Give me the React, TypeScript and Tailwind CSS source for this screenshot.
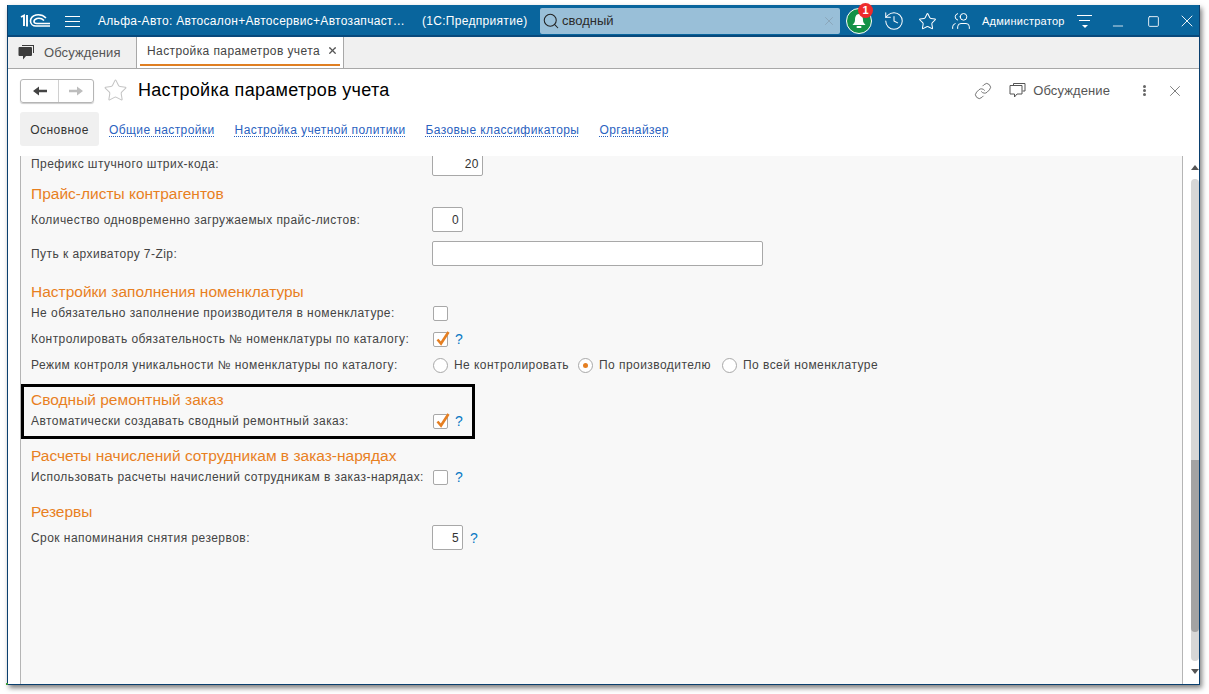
import { History, Star, Users, Link, X, Minus, Square, Search } from "lucide-react";
import type { ReactNode } from "react";

const Help = ({ className = "ml-[7px]" }: { className?: string }) => (
  <span className={`${className} text-[14px] leading-none text-[#0a78c4]`}>?</span>
);

const CheckBox = ({ checked = false }: { checked?: boolean }) => (
  <span className="relative block h-[15px] w-[15px] rounded-[2px] border border-[#a8a8a8] bg-white">
    {checked && (
      <svg className="absolute left-[1px] top-[-4px]" width="16" height="18" viewBox="0 0 16 18" fill="none">
        <path d="M2.5 10.5 L6 14.5 L13.5 3" stroke="#e57f22" strokeWidth="2.6" />
      </svg>
    )}
  </span>
);

const Radio = ({ label, on = false }: { label: string; on?: boolean }) => (
  <span className="flex items-center">
    <span className="flex h-[15px] w-[15px] items-center justify-center rounded-full border border-[#a8a8a8] bg-white">
      {on && <span className="h-[5px] w-[5px] rounded-full bg-[#e57f22]" />}
    </span>
    <span className="ml-[6px]">{label}</span>
  </span>
);

const Heading = ({ children, className }: { children: ReactNode; className: string }) => (
  <div className={`${className} flex h-5 items-center text-[15.5px] tracking-normal text-[#e8801f]`}>{children}</div>
);

const Row = ({ label, children, className }: { label: string; children?: ReactNode; className: string }) => (
  <div className={`${className} flex items-center`}>
    <div className="w-[401px] shrink-0">{label}</div>
    {children}
  </div>
);

const NumberBox = ({ value, width }: { value: string; width: string }) => (
  <div className={`${width} flex h-[25px] items-center justify-end rounded-[2px] border border-[#a8a8a8] bg-white pr-[3px] text-[#333]`}>
    {value}
  </div>
);

const links = ["Общие настройки", "Настройка учетной политики", "Базовые классификаторы", "Органайзер"];

export default function App() {
  return (
    <div className="h-[694px] w-[1209px] overflow-hidden bg-white pl-[7px] pt-[5px] font-['Liberation_Sans',Arial,sans-serif] text-[12px] tracking-[0.45px] text-[#444]">
      <div className="relative flex h-[680px] w-[1193px] flex-col border-x border-b border-[#0a3f6e] shadow-[2px_3px_5px_rgba(0,0,0,0.5)]">
        <span className="absolute bottom-[-1px] left-[-2px] h-[2px] w-[2px] bg-[#3c9a3c]" />

        {/* title bar */}
        <div className="flex h-[32px] shrink-0 items-center border-b-2 border-[#07497c] bg-[#09659d] pt-[2px] text-white">
          <svg className="ml-[12px] shrink-0" width="32" height="16" viewBox="0 0 32 16" fill="none" stroke="white">
            <path d="M1 4 L4 2.5 V13 M7 2 V13.5" strokeWidth="1.9" />
            <path d="M26 5 C23 2 19 1.5 16 2 C12 3 10.5 6 10.5 8 C10.5 11 13 13 16 13 H30" strokeWidth="1.6" />
            <path d="M24 7.5 C22 5.5 19 5 17 5.5 C15 6.2 14 7.5 14 8.5 C14 10 15.5 10.5 17 10.5 H30" strokeWidth="1.6" />
          </svg>
          <div className="ml-[13px] flex w-[16px] shrink-0 flex-col gap-[4px]">
            <span className="h-px w-[15px] bg-white" />
            <span className="h-px w-[15px] bg-white" />
            <span className="h-px w-[15px] bg-white" />
          </div>
          <span className="ml-[17px] w-[324px] shrink-0 whitespace-nowrap text-[12px] tracking-[0.3px]">
            Альфа-Авто: Автосалон+Автосервис+Автозапчаст…
          </span>
          <span className="w-[118px] shrink-0 whitespace-nowrap text-[12px] tracking-[0.3px]">(1С:Предприятие)</span>
          <div className="flex h-[26px] w-[300px] shrink-0 items-center rounded-[2px] bg-[#99bfd8] pl-[2px] text-[13px] tracking-normal text-[#2b2b2b]">
            <Search size={18} strokeWidth={1.4} className="text-[#222]" />
            <span className="ml-[2px]">сводный</span>
            <X size={14} strokeWidth={1.6} className="ml-auto mr-[4px] text-[#8aa5b8]" />
          </div>
          <div className="relative ml-[6px] flex h-[26px] w-[26px] shrink-0 items-center justify-center rounded-full border border-white bg-[#129147]">
            <svg width="16" height="16" viewBox="0 0 16 16" fill="white">
              <path d="M8 1 C5 1 4 4 4 7 C4 9 3 10.5 1.5 12 H14.5 C13 10.5 12 9 12 7 C12 4 11 1 8 1 Z" />
              <rect x="5.5" y="13" width="5" height="2" rx="1" />
            </svg>
            <span className="absolute right-[-2px] top-[-6px] flex h-[15px] w-[15px] items-center justify-center rounded-full bg-[#ee2b2b] text-[11px] font-bold tracking-normal text-white">
              1
            </span>
          </div>
          <History size={22} strokeWidth={1.1} className="ml-[11px] shrink-0" />
          <Star size={19} strokeWidth={1.3} className="ml-[13px] shrink-0" />
          <Users size={20} strokeWidth={1.2} className="ml-[14px] shrink-0 scale-x-[-1]" />
          <span className="ml-[11px] w-[83px] shrink-0 whitespace-nowrap text-[11px] tracking-[0.25px]">Администратор</span>
          <div className="ml-[12px] flex w-[15px] shrink-0 flex-col items-center gap-[4px]">
            <span className="h-px w-[15px] bg-white" />
            <span className="h-px w-[11px] bg-white" />
            <span className="h-0 w-0 border-x-[3px] border-t-[3px] border-x-transparent border-t-white" />
          </div>
          <Minus size={16} strokeWidth={1.2} className="ml-[18px] mt-[10px] shrink-0" />
          <Square size={13} strokeWidth={1.6} className="ml-[21px] shrink-0" />
          <X size={20} strokeWidth={1.1} className="ml-[17px] shrink-0" />
        </div>

        {/* open windows */}
        <div className="flex h-[32px] shrink-0 border-b border-[#a8a8a8] bg-[#f0f0f0]">
          <div className="flex w-[129px] shrink-0 items-center border-r border-[#a8a8a8] pl-[10px]">
            <svg width="17" height="17" viewBox="0 0 17 17" fill="#3c3c3c">
              <path d="M4 1 H16 V9 H15 V2 H4 Z" />
              <path d="M1.5 3 H13 Q14 3 14 4 V11 Q14 12 13 12 H8 L5 15.5 V12 H1.5 Q0.5 12 0.5 11 V4 Q0.5 3 1.5 3 Z" />
            </svg>
            <span className="ml-[9px] text-[13px] tracking-[0.1px] text-[#555]">Обсуждения</span>
          </div>
          <div className="flex w-[207px] shrink-0 flex-col border-r border-[#a8a8a8] bg-white px-[3px]">
            <div className="flex flex-1 items-center whitespace-nowrap pl-[7px] tracking-[0.4px] text-[#444]">
              <span>Настройка параметров учета</span>
              <X size={11} strokeWidth={2.8} className="ml-[7px] text-[#555]" />
            </div>
            <div className="mb-[2px] h-[2px] bg-[#e07f22]" />
          </div>
        </div>

        {/* form header */}
        <div className="flex h-[43px] shrink-0 items-center bg-white pl-[12px] pr-[15px]">
          <div className="flex h-[24px] w-[74px] items-center rounded-[3px] border border-[#b5b5b5] shadow-[0_1px_1px_rgba(0,0,0,0.2)]">
            <svg className="ml-[12px]" width="14" height="10" viewBox="0 0 14 10" fill="#444">
              <path d="M0 5 L6 0.5 V3.8 H14 V6.2 H6 V9.5 Z" />
            </svg>
            <span className="ml-[11px] h-full w-px bg-[#d0d0d0]" />
            <svg className="ml-[10px]" width="14" height="10" viewBox="0 0 14 10" fill="#bdbdbd">
              <path d="M14 5 L8 0.5 V3.8 H0 V6.2 H8 V9.5 Z" />
            </svg>
          </div>
          <Star size={25} strokeWidth={1} className="ml-[9px] text-[#c4c4c4]" />
          <h1 className="ml-[10px] text-[18px] tracking-[0.3px] text-black">Настройка параметров учета</h1>
          <Link size={18} strokeWidth={1.2} className="ml-auto text-[#666]" />
          <svg className="ml-[17px]" width="17" height="17" viewBox="0 0 17 17" fill="none" stroke="#555" strokeWidth="1">
            <path d="M4.5 3 V1.5 H16 V9 H13.5" />
            <path d="M1 3.5 H13 V12 H8 L5.5 15 V12 H1 Z" />
          </svg>
          <span className="ml-[7px] text-[13px] tracking-[0.1px] text-[#555]">Обсуждение</span>
          <span className="ml-[33px] flex flex-col gap-[1px]">
            <span className="h-[3px] w-[3px] rounded-full bg-[#666]" />
            <span className="h-[3px] w-[3px] rounded-full bg-[#666]" />
            <span className="h-[3px] w-[3px] rounded-full bg-[#666]" />
          </span>
          <X size={18} strokeWidth={1.1} className="ml-[20px] text-[#666]" />
        </div>

        {/* page tabs */}
        <div className="flex h-[44px] shrink-0 bg-white pl-[12px] pb-[10px]">
          <div className="flex w-[79px] items-center justify-center rounded-[3px] bg-[#f0f0f0] pt-[1px] text-[#333]">Основное</div>
          <div className="ml-[10px] flex items-center gap-[20px] pt-[1px] tracking-[0.4px] text-[#2a62c0]">
            {links.map((l) => (
              <span key={l} className="underline decoration-dotted underline-offset-2">
                {l}
              </span>
            ))}
          </div>
        </div>

        {/* form body */}
        <div className="flex min-h-0 flex-1 bg-white">
          <div className="w-[13px] shrink-0 border-r border-[#b5b5b5]" />
          <div className="w-[1162px] shrink-0 overflow-hidden border-r border-[#b5b5b5] bg-[#f8f8f8] pl-[10px]">
            <Row label="Префикс штучного штрих-кода:" className="-mt-[5px] h-[25px]">
              <NumberBox value="20" width="w-[51px]" />
            </Row>
            <Heading className="mt-[8px]">Прайс-листы контрагентов</Heading>
            <Row label="Количество одновременно загружаемых прайс-листов:" className="mt-[3px] h-[25px]">
              <NumberBox value="0" width="w-[31px]" />
            </Row>
            <Row label="Путь к архиватору 7-Zip:" className="mt-[9px] h-[25px]">
              <div className="h-[25px] w-[331px] rounded-[2px] border border-[#a8a8a8] bg-white" />
            </Row>
            <Heading className="mt-[16px]">Настройки заполнения номенклатуры</Heading>
            <Row label="Не обязательно заполнение производителя в номенклатуре:" className="mt-px h-5">
              <span className="ml-px"><CheckBox /></span>
            </Row>
            <Row label="Контролировать обязательность № номенклатуры по каталогу:" className="mt-[6px] h-5">
              <span className="ml-px"><CheckBox checked /></span>
              <Help />
            </Row>
            <Row label="Режим контроля уникальности № номенклатуры по каталогу:" className="mt-[6px] h-5">
              <div className="ml-px flex">
                <span className="w-[145px]"><Radio label="Не контролировать" /></span>
                <span className="w-[144px]"><Radio label="По производителю" on /></span>
                <Radio label="По всей номенклатуре" />
              </div>
            </Row>
            <div className="-ml-[10px] mt-[9px] w-[454px] border-[3px] border-black pb-[5px] pl-[7px] pt-[3px]">
              <Heading className="">Сводный ремонтный заказ</Heading>
              <Row label="Автоматически создавать сводный ремонтный заказ:" className="mt-px h-5">
                <span className="ml-px"><CheckBox checked /></span>
                <Help />
              </Row>
            </div>
            <Heading className="mt-[7px]">Расчеты начислений сотрудникам в заказ-нарядах</Heading>
            <Row label="Использовать расчеты начислений сотрудникам в заказ-нарядах:" className="mt-px h-5">
              <span className="ml-px"><CheckBox /></span>
              <Help />
            </Row>
            <Heading className="mt-[15px]">Резервы</Heading>
            <Row label="Срок напоминания снятия резервов:" className="mt-[3px] h-[25px]">
              <NumberBox value="5" width="w-[31px]" />
              <Help />
            </Row>
          </div>

          {/* scrollbar */}
          <div className="flex w-[16px] shrink-0 flex-col items-center bg-white pl-[8px] pt-[9px]">
            <span className="h-0 w-0 border-x-[4px] border-b-[5px] border-x-transparent border-b-[#555]" />
            <div className="mt-[9px] flex h-[482px] w-[8px] shrink-0 flex-col justify-end rounded-full bg-[#d6d6d6] pb-[29px]">
              <div className="h-[172px] rounded-b-full bg-[#a3a3a3]" />
            </div>
            <span className="mt-[8px] h-0 w-0 border-x-[4px] border-t-[5px] border-x-transparent border-t-[#555]" />
          </div>
        </div>
      </div>
    </div>
  );
}
